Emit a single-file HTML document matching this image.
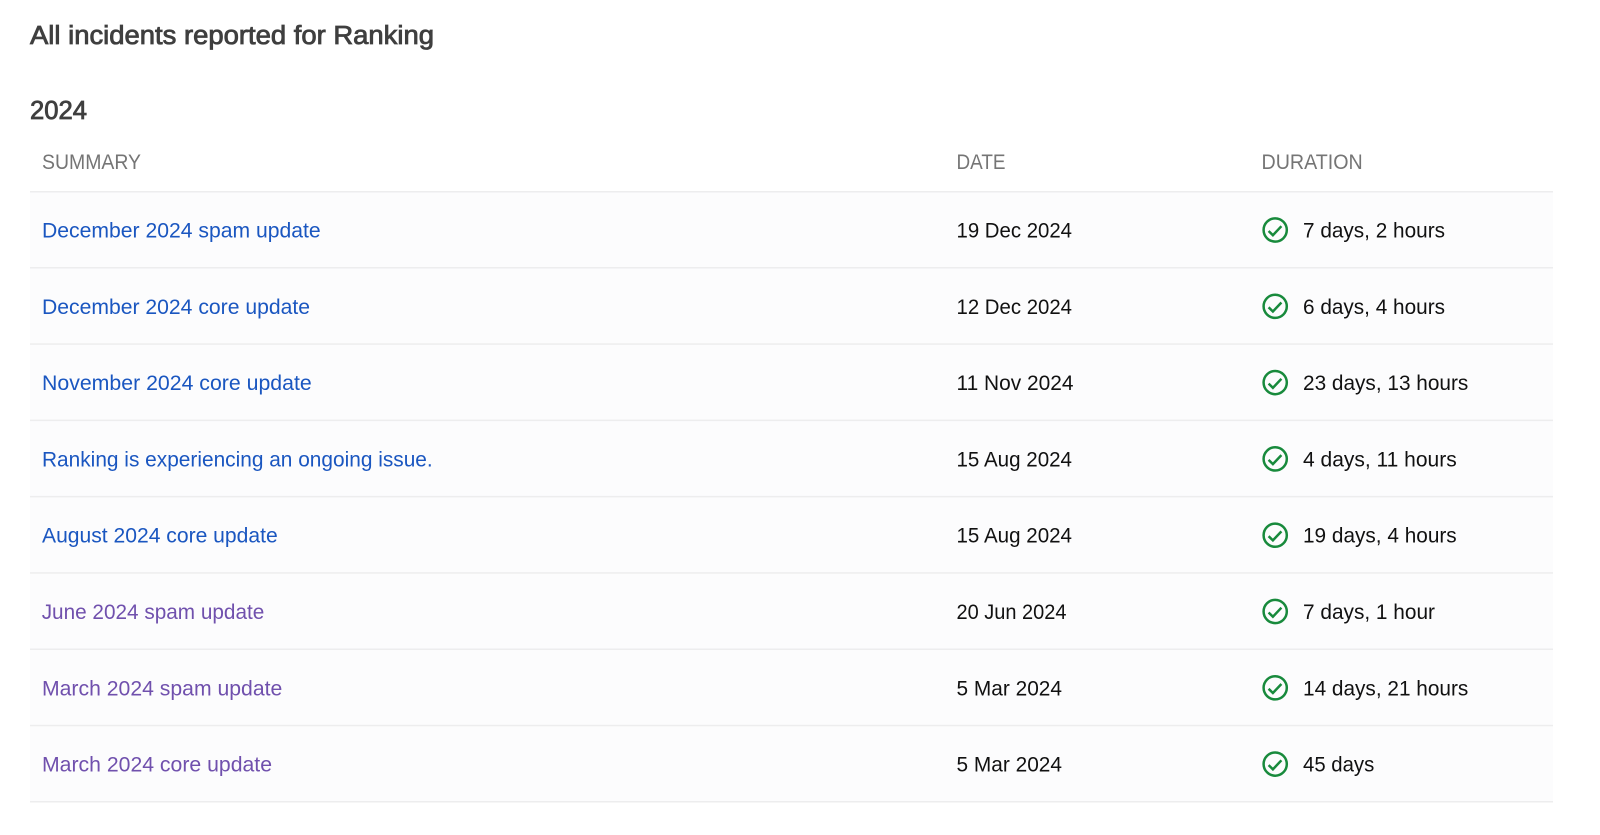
<!DOCTYPE html>
<html lang="en">
<head>
<meta charset="utf-8">
<title>All incidents reported for Ranking</title>
<style>
html,body{margin:0;padding:0;background:#fff;width:1600px;height:835px;overflow:hidden}
svg{display:block;filter:blur(.3px)}
text{font-family:"Liberation Sans",Arial,sans-serif;font-size:21px;fill:#111}
.h{font-size:25.5px;fill:#3f3f3f;stroke:#3f3f3f;stroke-width:.8px}
.th{fill:#757575;font-size:21px}
.b{fill:#1a56c0}
.v{fill:#7050ad}
.ln{fill:#ededee}
.ic circle{fill:none;stroke:#188a3c;stroke-width:2.5}
.ic path{fill:none;stroke:#188a3c;stroke-width:2.5}
</style>
</head>
<body>
<svg width="1600" height="835" viewBox="0 0 1600 835" xmlns="http://www.w3.org/2000/svg">
<defs>
<g id="c" class="ic"><circle cx="0" cy="0" r="11.6"/><path d="M-6.6 1L-2.3 5.2L6.2-3.8"/></g>
</defs>
<rect x="30" y="192" width="1523" height="610" fill="#fcfcfd"/>
<rect class="ln" x="30" y="191" width="1523" height="1.5"/>
<rect class="ln" x="30" y="267" width="1523" height="1.5"/>
<rect class="ln" x="30" y="343.3" width="1523" height="1.5"/>
<rect class="ln" x="30" y="419.6" width="1523" height="1.5"/>
<rect class="ln" x="30" y="495.9" width="1523" height="1.5"/>
<rect class="ln" x="30" y="572.2" width="1523" height="1.5"/>
<rect class="ln" x="30" y="648.5" width="1523" height="1.5"/>
<rect class="ln" x="30" y="724.8" width="1523" height="1.5"/>
<rect class="ln" x="30" y="801" width="1523" height="1.5"/>

<text class="h" x="30" y="44" textLength="404" lengthAdjust="spacingAndGlyphs">All incidents reported for Ranking</text>
<text class="h" x="30" y="119" textLength="57" lengthAdjust="spacingAndGlyphs">2024</text>

<text class="th" x="42" y="169" textLength="99" lengthAdjust="spacingAndGlyphs">SUMMARY</text>
<text class="th" x="956.5" y="169" textLength="49" lengthAdjust="spacingAndGlyphs">DATE</text>
<text class="th" x="1261.5" y="169" textLength="101.2" lengthAdjust="spacingAndGlyphs">DURATION</text>

<text class="b" x="42" y="237.5" textLength="278.7" lengthAdjust="spacingAndGlyphs">December 2024 spam update</text>
<text x="956.5" y="237.5" textLength="115.5" lengthAdjust="spacingAndGlyphs">19 Dec 2024</text>
<use href="#c" x="1275.2" y="230"/>
<text x="1303" y="237.5" textLength="142" lengthAdjust="spacingAndGlyphs">7 days, 2 hours</text>

<text class="b" x="42" y="313.8" textLength="268" lengthAdjust="spacingAndGlyphs">December 2024 core update</text>
<text x="956.5" y="313.8" textLength="115.5" lengthAdjust="spacingAndGlyphs">12 Dec 2024</text>
<use href="#c" x="1275.2" y="306.3"/>
<text x="1303" y="313.8" textLength="142" lengthAdjust="spacingAndGlyphs">6 days, 4 hours</text>

<text class="b" x="42" y="390.1" textLength="269.7" lengthAdjust="spacingAndGlyphs">November 2024 core update</text>
<text x="956.5" y="390.1" textLength="117" lengthAdjust="spacingAndGlyphs">11 Nov 2024</text>
<use href="#c" x="1275.2" y="382.6"/>
<text x="1303" y="390.1" textLength="165.3" lengthAdjust="spacingAndGlyphs">23 days, 13 hours</text>

<text class="b" x="42" y="466.4" textLength="390.7" lengthAdjust="spacingAndGlyphs">Ranking is experiencing an ongoing issue.</text>
<text x="956.5" y="466.4" textLength="115.5" lengthAdjust="spacingAndGlyphs">15 Aug 2024</text>
<use href="#c" x="1275.2" y="458.9"/>
<text x="1303" y="466.4" textLength="153.7" lengthAdjust="spacingAndGlyphs">4 days, 11 hours</text>

<text class="b" x="42" y="542.7" textLength="235.7" lengthAdjust="spacingAndGlyphs">August 2024 core update</text>
<text x="956.5" y="542.7" textLength="115.5" lengthAdjust="spacingAndGlyphs">15 Aug 2024</text>
<use href="#c" x="1275.2" y="535.2"/>
<text x="1303" y="542.7" textLength="153.7" lengthAdjust="spacingAndGlyphs">19 days, 4 hours</text>

<text class="v" x="41.7" y="619" textLength="222.6" lengthAdjust="spacingAndGlyphs">June 2024 spam update</text>
<text x="956.5" y="619" textLength="110" lengthAdjust="spacingAndGlyphs">20 Jun 2024</text>
<use href="#c" x="1275.2" y="611.5"/>
<text x="1303" y="619" textLength="132" lengthAdjust="spacingAndGlyphs">7 days, 1 hour</text>

<text class="v" x="42" y="695.3" textLength="240.3" lengthAdjust="spacingAndGlyphs">March 2024 spam update</text>
<text x="956.5" y="695.3" textLength="105.5" lengthAdjust="spacingAndGlyphs">5 Mar 2024</text>
<use href="#c" x="1275.2" y="687.8"/>
<text x="1303" y="695.3" textLength="165.3" lengthAdjust="spacingAndGlyphs">14 days, 21 hours</text>

<text class="v" x="42" y="771.6" textLength="230" lengthAdjust="spacingAndGlyphs">March 2024 core update</text>
<text x="956.5" y="771.6" textLength="105.5" lengthAdjust="spacingAndGlyphs">5 Mar 2024</text>
<use href="#c" x="1275.2" y="764.1"/>
<text x="1303" y="771.6" textLength="71.3" lengthAdjust="spacingAndGlyphs">45 days</text>
</svg>
</body>
</html>
